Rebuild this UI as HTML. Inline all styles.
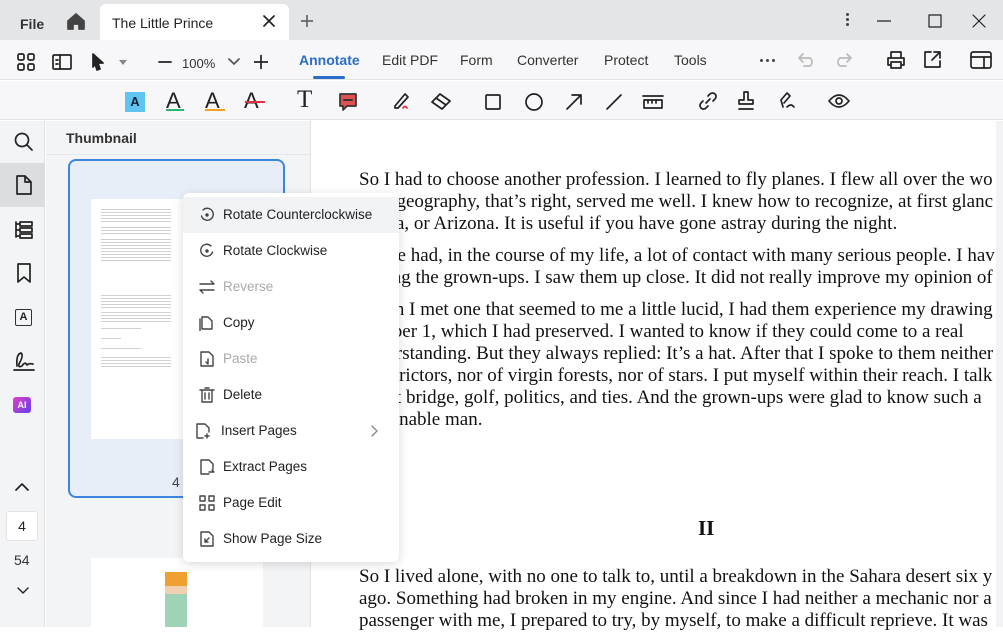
<!DOCTYPE html>
<html><head><meta charset="utf-8"><style>
*{box-sizing:border-box;margin:0;padding:0}
body{width:1003px;height:627px;overflow:hidden;font-family:"Liberation Sans",sans-serif;background:#fff;position:relative;color:#222}
.abs{position:absolute}
svg{position:absolute;fill:none;stroke:#222;stroke-width:1.7;stroke-linecap:round;stroke-linejoin:round}
.tb{font-size:14px;color:#333}
.doc{font-family:"Liberation Serif",serif;font-size:19px;line-height:22px;color:#111;white-space:nowrap}
.mi{position:absolute;left:0;width:216px;height:36px;font-size:13.5px;color:#222}
.mi span{position:absolute;left:40px;top:10px}
.mi svg{left:16px;top:10px;stroke:#444;stroke-width:1.4}
.dis{color:#aaa!important}
.tl{position:absolute;left:101px;width:70px;background:repeating-linear-gradient(#fff 0 2px,#d0d0d0 2px 3px)}
</style></head><body>
<div class="abs" style="left:0;top:0;width:1003px;height:40px;background:#e4e5e7"></div>
<div class="abs" style="left:20px;top:16px;font-size:14px;font-weight:bold;color:#333">File</div>
<svg style="left:66px;top:12px" width="20" height="18" viewBox="0 0 20 18"><path d="M2 9 L10 2 L18 9 V17 H13 V12 H7 V17 H2Z" fill="#444" stroke="#444"/></svg>
<div class="abs" style="left:100px;top:4px;width:189px;height:36px;background:#fff;border-radius:6px 6px 0 0"></div>
<div class="abs" style="left:112px;top:15px;font-size:14px;color:#222">The Little Prince</div>
<svg style="left:263px;top:15px" width="12" height="12"><path d="M1 1L11 11M11 1L1 11"/></svg>
<svg style="left:301px;top:15px" width="12" height="12" ><path d="M6 0V12M0 6H12" stroke="#666"/></svg>
<div class="abs" style="left:846px;top:13px;width:3px;height:3px;background:#444;border-radius:2px;box-shadow:0 5px #444,0 10px #444"></div>
<svg style="left:877px;top:20px" width="14" height="2"><path d="M0 1H14" stroke-width="1.2"/></svg>
<svg style="left:928px;top:14px" width="14" height="14"><rect x="1" y="1" width="12" height="12" stroke-width="1.2"/></svg>
<svg style="left:972px;top:14px" width="14" height="14"><path d="M1 1L13 13M13 1L1 13" stroke-width="1.2"/></svg>
<div class="abs" style="left:0;top:40px;width:1003px;height:40px;background:#f7f7f9;border-bottom:1px solid #e3e3e6"></div>
<svg style="left:17px;top:53px" width="18" height="18"><rect x="1" y="1" width="6" height="6" rx="1.5"/><rect x="11" y="1" width="6" height="6" rx="1.5"/><rect x="1" y="11" width="6" height="6" rx="1.5"/><rect x="11" y="11" width="6" height="6" rx="1.5"/></svg>
<svg style="left:52px;top:54px" width="20" height="16"><rect x="1" y="1" width="18" height="14" rx="1"/><path d="M8 1V15M4 6H6M4 10H6"/></svg>
<svg style="left:91px;top:53px" width="14" height="18"><path d="M2 1L12 10H7L9 16L6 17L4 11L2 14Z" fill="#222"/></svg>
<div class="abs" style="left:119px;top:60px;border:4px solid transparent;border-top:5px solid #888"></div>
<svg style="left:158px;top:61px" width="14" height="2"><path d="M1 1H13"/></svg>
<div class="abs tb" style="left:182px;top:56px;font-size:13px">100%</div>
<svg style="left:228px;top:58px" width="12" height="8"><path d="M1 1L6 6L11 1" stroke="#555"/></svg>
<svg style="left:254px;top:55px" width="14" height="14"><path d="M7 0V14M0 7H14"/></svg>
<div class="abs" style="left:299px;top:52px;font-size:14px;font-weight:bold;color:#2a6ec9">Annotate</div>
<div class="abs" style="left:313px;top:76px;width:32px;height:3px;background:#2a6ec9;border-radius:2px"></div>
<div class="abs tb" style="left:382px;top:52px">Edit PDF</div>
<div class="abs tb" style="left:460px;top:52px">Form</div>
<div class="abs tb" style="left:517px;top:52px">Converter</div>
<div class="abs tb" style="left:604px;top:52px">Protect</div>
<div class="abs tb" style="left:674px;top:52px">Tools</div>
<div class="abs" style="left:760px;top:59px;width:3px;height:3px;background:#444;border-radius:2px;box-shadow:6px 0 #444,12px 0 #444"></div>
<svg style="left:798px;top:53px" width="18" height="14"><path d="M5 1L1 5L5 9M1 5H12A5 5 0 0 1 12 13H6" stroke="#bbb"/></svg>
<svg style="left:834px;top:53px" width="18" height="14"><path d="M13 1L17 5L13 9M17 5H6A5 5 0 0 0 6 13H12" stroke="#bbb"/></svg>
<svg style="left:886px;top:50px" width="20" height="20"><path d="M5 7V2H15V7M5 15H2V8H18V15H15M5 12H15V18H5Z"/></svg>
<svg style="left:923px;top:50px" width="19" height="19"><path d="M8 2H2V17H17V11M11 2H17V8M17 2L9 10"/></svg>
<svg style="left:970px;top:51px" width="22" height="18"><rect x="1" y="1" width="20" height="16" rx="2"/><path d="M1 6H21M14 6V17"/></svg>
<div class="abs" style="left:0;top:81px;width:1003px;height:39px;background:#f7f7f9;border-bottom:1px solid #e3e3e6"></div>
<div class="abs" style="left:125px;top:92px;width:20px;height:20px;background:#5fc4f0;font-size:13px;font-weight:bold;text-align:center;line-height:20px;color:#123">A</div>
<div class="abs" style="left:166px;top:88px;font-size:22px;color:#222">A</div><div class="abs" style="left:166px;top:109px;width:18px;height:2px;background:#2bb673"></div>
<div class="abs" style="left:205px;top:88px;font-size:22px;color:#222">A</div><div class="abs" style="left:205px;top:109px;width:20px;height:2px;background:#f0a020"></div>
<div class="abs" style="left:244px;top:88px;font-size:22px;color:#222">A</div><div class="abs" style="left:245px;top:101px;width:20px;height:2px;background:#e03040"></div>
<div class="abs" style="left:297px;top:86px;font-family:'Liberation Serif',serif;font-size:25px;color:#222">T</div>
<svg style="left:338px;top:92px" width="20" height="20"><path d="M2 2H18V14H9L5 18V14H2Z" fill="#e05050" stroke="#333"/><path d="M6 8H14" stroke="#333" stroke-width="2"/></svg>
<svg style="left:392px;top:91px" width="20" height="20"><path d="M3 15L13 3L16 6L6 17H3Z" /><path d="M11 17Q13 14 15 17" stroke="#e03040"/></svg>
<svg style="left:430px;top:92px" width="22" height="18"><path d="M2 10L10 2L20 9L12 17Z M6 6L16 13"/></svg>
<svg style="left:485px;top:94px" width="16" height="16"><rect x="1" y="1" width="14" height="14" rx="1"/></svg>
<svg style="left:525px;top:93px" width="18" height="18"><circle cx="9" cy="9" r="8"/></svg>
<svg style="left:565px;top:93px" width="18" height="18"><path d="M2 16L16 2M7 2H16V11"/></svg>
<svg style="left:605px;top:93px" width="18" height="18"><path d="M2 16L16 2"/></svg>
<svg style="left:642px;top:94px" width="22" height="16"><path d="M1 2H21"/><rect x="2" y="6" width="18" height="8"/><path d="M6 6V9M10 6V9M14 6V9"/></svg>
<svg style="left:697px;top:91px" width="22" height="20"><path d="M9 12L13 8M11 5L13 3A3 3 0 0 1 18 8L16 10M11 15L9 17A3 3 0 0 1 4 12L6 10"/></svg>
<svg style="left:736px;top:90px" width="20" height="22"><path d="M8 2H12V10H17V14H3V10H8ZM3 19H17"/></svg>
<svg style="left:777px;top:90px" width="20" height="22"><path d="M6 17L4 10L10 3L13 6L7 13M10 17Q14 13 17 17"/></svg>
<svg style="left:828px;top:93px" width="22" height="16"><path d="M1 8Q11 -4 21 8Q11 20 1 8Z"/><circle cx="11" cy="8" r="3"/></svg>
<div class="abs" style="left:0;top:121px;width:45px;height:506px;background:#f3f4f6;border-right:1px solid #e3e3e6"></div>
<div class="abs" style="left:0;top:163px;width:45px;height:44px;background:#dcdde0"></div>
<svg style="left:14px;top:132px" width="20" height="20"><circle cx="8" cy="8" r="6.5"/><path d="M13 13L18 18"/></svg>
<svg style="left:16px;top:175px" width="16" height="20"><path d="M1 1H9L15 7V19H1ZM9 1V7H15"/></svg>
<svg style="left:14px;top:220px" width="20" height="20"><path d="M2 2V17M2 4H6M2 10H6M2 16H6M6 2H18V6H6ZM6 8H18V12H6ZM6 14H18V18H6Z"/></svg>
<svg style="left:16px;top:263px" width="16" height="20"><path d="M2 1H14V19L8 14L2 19Z"/></svg>
<div class="abs" style="left:15px;top:309px;width:17px;height:17px;border:1.5px solid #333;border-radius:2px;font-size:11px;font-weight:bold;text-align:center;line-height:14px">A</div>
<svg style="left:12px;top:350px" width="24" height="22"><path d="M2 20H22M5 16Q4 4 9 3Q12 5 7 14Q6 18 10 16Q13 11 15 15Q17 13 21 14"/></svg>
<div class="abs" style="left:13px;top:397px;width:18px;height:16px;background:linear-gradient(135deg,#e040c0,#6040f0);border-radius:3px;color:#fff;font-size:9px;font-weight:bold;text-align:center;line-height:16px">AI</div>
<svg style="left:15px;top:482px" width="14" height="10"><path d="M1 8L7 2L13 8"/></svg>
<div class="abs" style="left:6px;top:511px;width:32px;height:30px;background:#fff;border:1px solid #e3e3e6;border-radius:3px;font-size:14px;text-align:center;line-height:28px">4</div>
<div class="abs" style="left:14px;top:552px;font-size:14px;color:#333">54</div>
<svg style="left:17px;top:587px" width="12" height="8"><path d="M1 1L6 6L11 1" stroke-width="1.4"/></svg>
<div class="abs" style="left:46px;top:121px;width:264px;height:506px;background:#f3f4f6"></div>
<div class="abs" style="left:46px;top:154px;width:264px;height:1px;background:#e6e7ea"></div>
<div class="abs" style="left:66px;top:130px;font-size:14px;font-weight:bold;color:#333">Thumbnail</div>
<div class="abs" style="left:68px;top:159px;width:217px;height:339px;background:#e8eef8;border:2px solid #3d86e0;border-radius:8px"></div>
<div class="abs" style="left:91px;top:199px;width:172px;height:240px;background:#fff"></div>
<div class="tl" style="top:207px;height:15px"></div>
<div class="tl" style="top:225px;height:9px"></div>
<div class="tl" style="top:237px;height:24px"></div>
<div class="tl" style="top:293px;height:15px"></div>
<div class="tl" style="top:310px;height:12px"></div>
<div class="tl" style="top:326px;height:3px;width:40px"></div>
<div class="tl" style="top:336px;height:3px;width:20px"></div>
<div class="tl" style="top:346px;height:3px;width:40px"></div>
<div class="tl" style="top:355px;height:12px"></div>
<div class="abs" style="left:172px;top:474px;font-size:14px;color:#444">4</div>
<div class="abs" style="left:91px;top:558px;width:172px;height:69px;background:#fff"></div>
<div class="abs" style="left:165px;top:572px;width:22px;height:55px;background:linear-gradient(#f0a030 0 25%,#f0d0b0 25% 40%,#9fd3b8 40%)"></div>
<div class="abs" style="left:310px;top:121px;width:1px;height:506px;background:#e3e3e6"></div>
<div class="abs" style="left:996px;top:121px;width:7px;height:506px;background:#f3f3f5"></div>
<div class="abs doc" style="left:359px;top:169px">So I had to choose another profession. I learned to fly planes. I flew all over the wo<br>And geography, that’s right, served me well. I knew how to recognize, at first glanc<br>China, or Arizona. It is useful if you have gone astray during the night.</div>
<div class="abs doc" style="left:359px;top:245px">I have had, in the course of my life, a lot of contact with many serious people. I hav<br>among the grown-ups. I saw them up close. It did not really improve my opinion of</div>
<div class="abs doc" style="left:359px;top:299px">When I met one that seemed to me a little lucid, I had them experience my drawing<br>number 1, which I had preserved. I wanted to know if they could come to a real<br>understanding. But they always replied: It’s a hat. After that I spoke to them neither<br>constrictors, nor of virgin forests, nor of stars. I put myself within their reach. I talk<br>about bridge, golf, politics, and ties. And the grown-ups were glad to know such a<br>reasonable man.</div>
<div class="abs doc" style="left:698px;top:517px;font-weight:bold;font-size:21px">II</div>
<div class="abs doc" style="left:359px;top:566px">So I lived alone, with no one to talk to, until a breakdown in the Sahara desert six y<br>ago. Something had broken in my engine. And since I had neither a mechanic nor a<br>passenger with me, I prepared to try, by myself, to make a difficult reprieve. It was</div>
<div class="abs" style="left:183px;top:193px;width:216px;height:369px;background:#fff;border-radius:6px;box-shadow:0 2px 10px rgba(0,0,0,.15)">
<div class="mi" style="top:4px;background:#f2f3f5"><svg width="16" height="16"><path d="M4 3A6 6 0 1 1 2.5 9"/><circle cx="8" cy="8" r="1" fill="#444"/></svg><span>Rotate Counterclockwise</span></div>
<div class="mi" style="top:40px"><svg width="16" height="16"><path d="M12 3A6 6 0 1 0 13.5 9"/><circle cx="8" cy="8" r="1" fill="#444"/></svg><span>Rotate Clockwise</span></div>
<div class="mi" style="top:76px"><svg width="16" height="16"><path d="M1 5H15L12 2M15 11H1L4 14"/></svg><span class="dis">Reverse</span></div>
<div class="mi" style="top:112px"><svg width="16" height="16"><path d="M3 2V14H13V6L9 2ZM1 4V16"/></svg><span>Copy</span></div>
<div class="mi" style="top:148px"><svg width="16" height="16"><path d="M2 1H10L14 5V15H2Z M9 8V13L7 11"/></svg><span class="dis">Paste</span></div>
<div class="mi" style="top:184px"><svg width="16" height="16"><path d="M3 3H13V15H3ZM1 3H15M6 1H10M6 6V12M10 6V12"/></svg><span>Delete</span></div>
<div class="mi" style="top:220px"><svg style="left:12px" width="16" height="16"><path d="M2 1H10L14 5V9M8 15H2V1M12 11V15M10 13H14"/></svg><span style="left:38px">Insert Pages</span><svg style="left:188px;top:12px" width="8" height="12"><path d="M1 1L6 6L1 11" stroke="#888"/></svg></div>
<div class="mi" style="top:256px"><svg width="16" height="16"><path d="M2 1H10L14 5V10M10 15H2V1M10 13H15L13 11"/></svg><span>Extract Pages</span></div>
<div class="mi" style="top:292px"><svg width="16" height="16"><rect x="1" y="1" width="5" height="5"/><rect x="10" y="1" width="5" height="5"/><rect x="1" y="10" width="5" height="5"/><rect x="10" y="10" width="5" height="5"/></svg><span>Page Edit</span></div>
<div class="mi" style="top:328px"><svg width="16" height="16"><path d="M2 1H10L14 5V15H2Z M6 11L10 7M6 8V11H9"/></svg><span>Show Page Size</span></div>
</div>
</body></html>
